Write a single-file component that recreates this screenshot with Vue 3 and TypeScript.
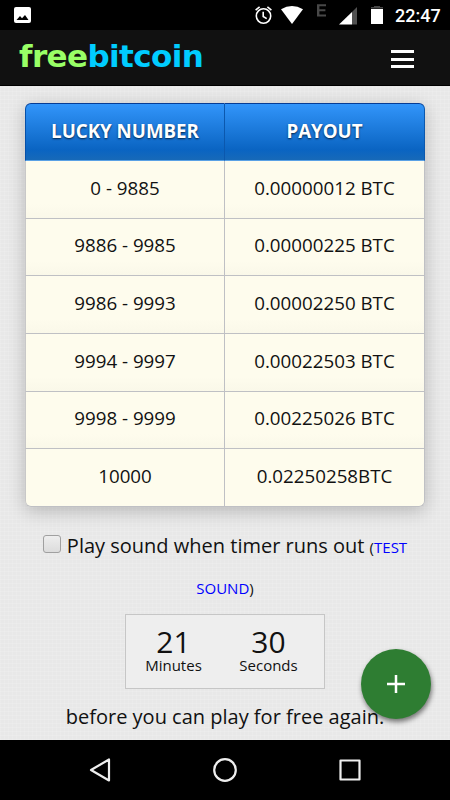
<script setup lang="ts">
interface Prize {
  range: string
  payout: string
}

const prizes: Prize[] = [
  { range: '0 - 9885', payout: '0.00000012 BTC' },
  { range: '9886 - 9985', payout: '0.00000225 BTC' },
  { range: '9986 - 9993', payout: '0.00002250 BTC' },
  { range: '9994 - 9997', payout: '0.00022503 BTC' },
  { range: '9998 - 9999', payout: '0.00225026 BTC' },
  { range: '10000', payout: '0.02250258BTC' },
]

const countdown = [
  { value: 21, unit: 'Minutes' },
  { value: 30, unit: 'Seconds' },
]
</script>

<template>
  <div class="screen">
    <div class="status">
      <svg class="picture" width="17" height="16" viewBox="0 0 17 16">
        <rect width="17" height="16" rx="2" fill="#fff" />
        <path d="M2.5 13 6 9l2 2.3L11 8l3.5 5z" fill="#000" />
      </svg>
      <div class="indicators">
        <svg width="135" height="30" viewBox="0 0 135 30">
          <g fill="none" stroke="#fff" stroke-width="1.6">
            <circle cx="13.5" cy="16" r="7.2" />
            <path d="M13.2 11.8v4.7l3.5 2.1M5.6 10.2l4-3.3M21.4 10.2l-4-3.3" />
          </g>
          <path d="M31 9.2Q42 2.8 53 9.2L42 24z" fill="#fff" />
          <path d="M67 4.3h9v2h-6.6v3h6v2h-6v3.2H76v2h-9z" fill="#484848" />
          <path d="M102 24.5h5V7l-5 5z" fill="#505050" />
          <path d="M89 24.5h13V12z" fill="#fff" />
          <path d="M133 8.5h-12V7h3V6h6v1h3z" fill="#484848" />
          <path d="M121 9h12v15h-12z" fill="#fff" />
        </svg>
        <span class="clock">22:47</span>
      </div>
    </div>

    <header class="navbar">
      <div class="logo"><span class="free">free</span>bitcoin</div>
      <button class="menu" aria-label="Menu"><i></i><i></i><i></i></button>
    </header>

    <main class="page">
      <table class="prizes">
        <thead>
          <tr><th>LUCKY NUMBER</th><th>PAYOUT</th></tr>
        </thead>
        <tbody>
          <tr v-for="prize in prizes" :key="prize.range">
            <td>{{ prize.range }}</td>
            <td>{{ prize.payout }}</td>
          </tr>
        </tbody>
      </table>

      <p class="sound">
        <span class="check"></span>Play sound when timer runs out
        <small>(<a>TEST<br>SOUND</a>)</small>
      </p>

      <div class="timer">
        <div v-for="part in countdown" :key="part.unit" class="part">
          <span class="amount">{{ part.value }}</span>
          <span class="unit">{{ part.unit }}</span>
        </div>
      </div>
      <p class="again">before you can play for free again.</p>

      <button class="fab" aria-label="Add">
        <svg width="18" height="18" viewBox="0 0 18 18"><path d="M9 0v18M0 9h18" stroke="#fff" stroke-width="2.5" /></svg>
      </button>
    </main>

    <nav class="softkeys">
      <svg width="450" height="60" viewBox="0 0 450 60" fill="none" stroke="#eee" stroke-width="2.2" stroke-linejoin="round">
        <path d="M109 19.5v21L91 30z" />
        <circle cx="225" cy="30" r="10.8" />
        <rect x="340.5" y="20.5" width="19" height="19" />
      </svg>
    </nav>
  </div>
</template>

<style>
body {
  margin: 0;
}
</style>

<style scoped>
.screen {
  width: 450px;
  height: 800px;
  display: flex;
  flex-direction: column;
  overflow: hidden;
  font-family: "Open Sans", "Noto Sans", sans-serif;
  color: #111;
}
.status {
  height: 30px;
  flex: none;
  background: #000;
  display: flex;
  justify-content: space-between;
  align-items: center;
  padding: 0 10px 0 14px;
  box-sizing: border-box;
}
.indicators {
  display: flex;
  align-items: center;
  gap: 10px;
}
.clock {
  width: 45px;
  color: #fff;
  font: 500 18px/30px Roboto, sans-serif;
  white-space: nowrap;
  padding-top: 1px;
}
.navbar {
  height: 56px;
  flex: none;
  box-sizing: border-box;
  background: #111;
  border-bottom: 1px solid #000;
  display: flex;
  justify-content: space-between;
  align-items: center;
  padding: 0 36px 0 19px;
}
.logo {
  color: #0cf;
  font-family: "DejaVu Sans", sans-serif;
  font-weight: 700;
  font-size: 31px;
  line-height: 55px;
  letter-spacing: -0.6px;
  margin-top: -3px;
}
.free {
  color: #9f6;
}
.menu {
  display: flex;
  flex-direction: column;
  gap: 4.5px;
  padding: 0;
  border: 0;
  background: none;
  margin-top: 3px;
}
.menu i {
  width: 23px;
  height: 3px;
  background: #fff;
}
.page {
  position: relative;
  flex: 1;
  min-height: 0;
  padding: 17px 25px 0;
  background-color: #e8e8e8;
  background-image:
    repeating-linear-gradient(0deg, rgba(255, 255, 255, 0.12) 0 1px, transparent 1px 4px),
    repeating-linear-gradient(90deg, rgba(255, 255, 255, 0.12) 0 1px, transparent 1px 4px);
}
.prizes {
  width: 400px;
  height: 404px;
  table-layout: fixed;
  border-collapse: separate;
  border-spacing: 0;
  border-radius: 6px;
  box-shadow: 0 4px 18px rgba(0, 0, 0, 0.22);
}
.prizes th {
  height: 58px;
  box-sizing: border-box;
  padding: 0 0 4px;
  color: #fff;
  font-size: 18.7px;
  font-weight: 700;
  text-shadow: 0 1px 2px #024;
  background: linear-gradient(#3295fa, #0a64c2 82%, #1769b8);
  border-top: 1px solid #053c95;
  border-right: 1px solid #0b58ae;
  border-bottom: 1px solid #5aa1e5;
}
.prizes th:first-child {
  border-left: 1px solid #0650a8;
  border-top-left-radius: 6px;
}
.prizes th:last-child {
  border-top-right-radius: 6px;
}
.prizes td {
  box-sizing: border-box;
  padding: 0 0 4px;
  text-align: center;
  font-size: 18.75px;
  background: linear-gradient(#fefced 75%, #faf8e9);
  border-right: 1px solid #bfc0c4;
  border-bottom: 1px solid #bfc0c4;
}
.prizes td:first-child {
  border-left: 1px solid #c8c8c8;
}
.prizes tr:last-child td {
  background: #fefced;
}
.prizes tr:last-child td:first-child {
  border-bottom-left-radius: 6px;
}
.prizes tr:last-child td:last-child {
  border-bottom-right-radius: 6px;
}
.sound {
  margin: 19px 0 0;
  text-align: center;
  font-size: 20px;
  line-height: 40.5px;
  white-space: nowrap;
}
.sound small {
  font-size: 15px;
  line-height: 1;
}
.sound a {
  color: #00f;
}
.check {
  display: inline-block;
  width: 18px;
  height: 18px;
  box-sizing: border-box;
  margin-right: 6px;
  border: 1px solid #a0a0a0;
  border-radius: 3px;
  background: linear-gradient(#eee, #dcdcdc);
}
.timer {
  width: 200px;
  height: 75px;
  box-sizing: border-box;
  margin: 7px auto 0;
  border: 1px solid #c6c6c6;
  background: #eee;
  display: flex;
  justify-content: center;
  padding: 12px 8px 0 0;
}
.part {
  width: 95px;
  display: flex;
  flex-direction: column;
  align-items: center;
}
.amount {
  font-size: 30px;
  line-height: 30px;
}
.unit {
  font-size: 15px;
  line-height: 16px;
}
.again {
  margin: 7px 0 0;
  text-align: center;
  font-size: 20px;
  line-height: 41px;
}
.fab {
  position: absolute;
  right: 19px;
  bottom: 21px;
  width: 70px;
  height: 70px;
  padding: 0;
  border: 0;
  border-radius: 50%;
  background: #2e7d32;
  box-shadow: 1px 3px 5px rgba(0, 0, 0, 0.5);
  display: flex;
  align-items: center;
  justify-content: center;
}
.softkeys {
  height: 60px;
  flex: none;
  background: #000;
}
</style>
